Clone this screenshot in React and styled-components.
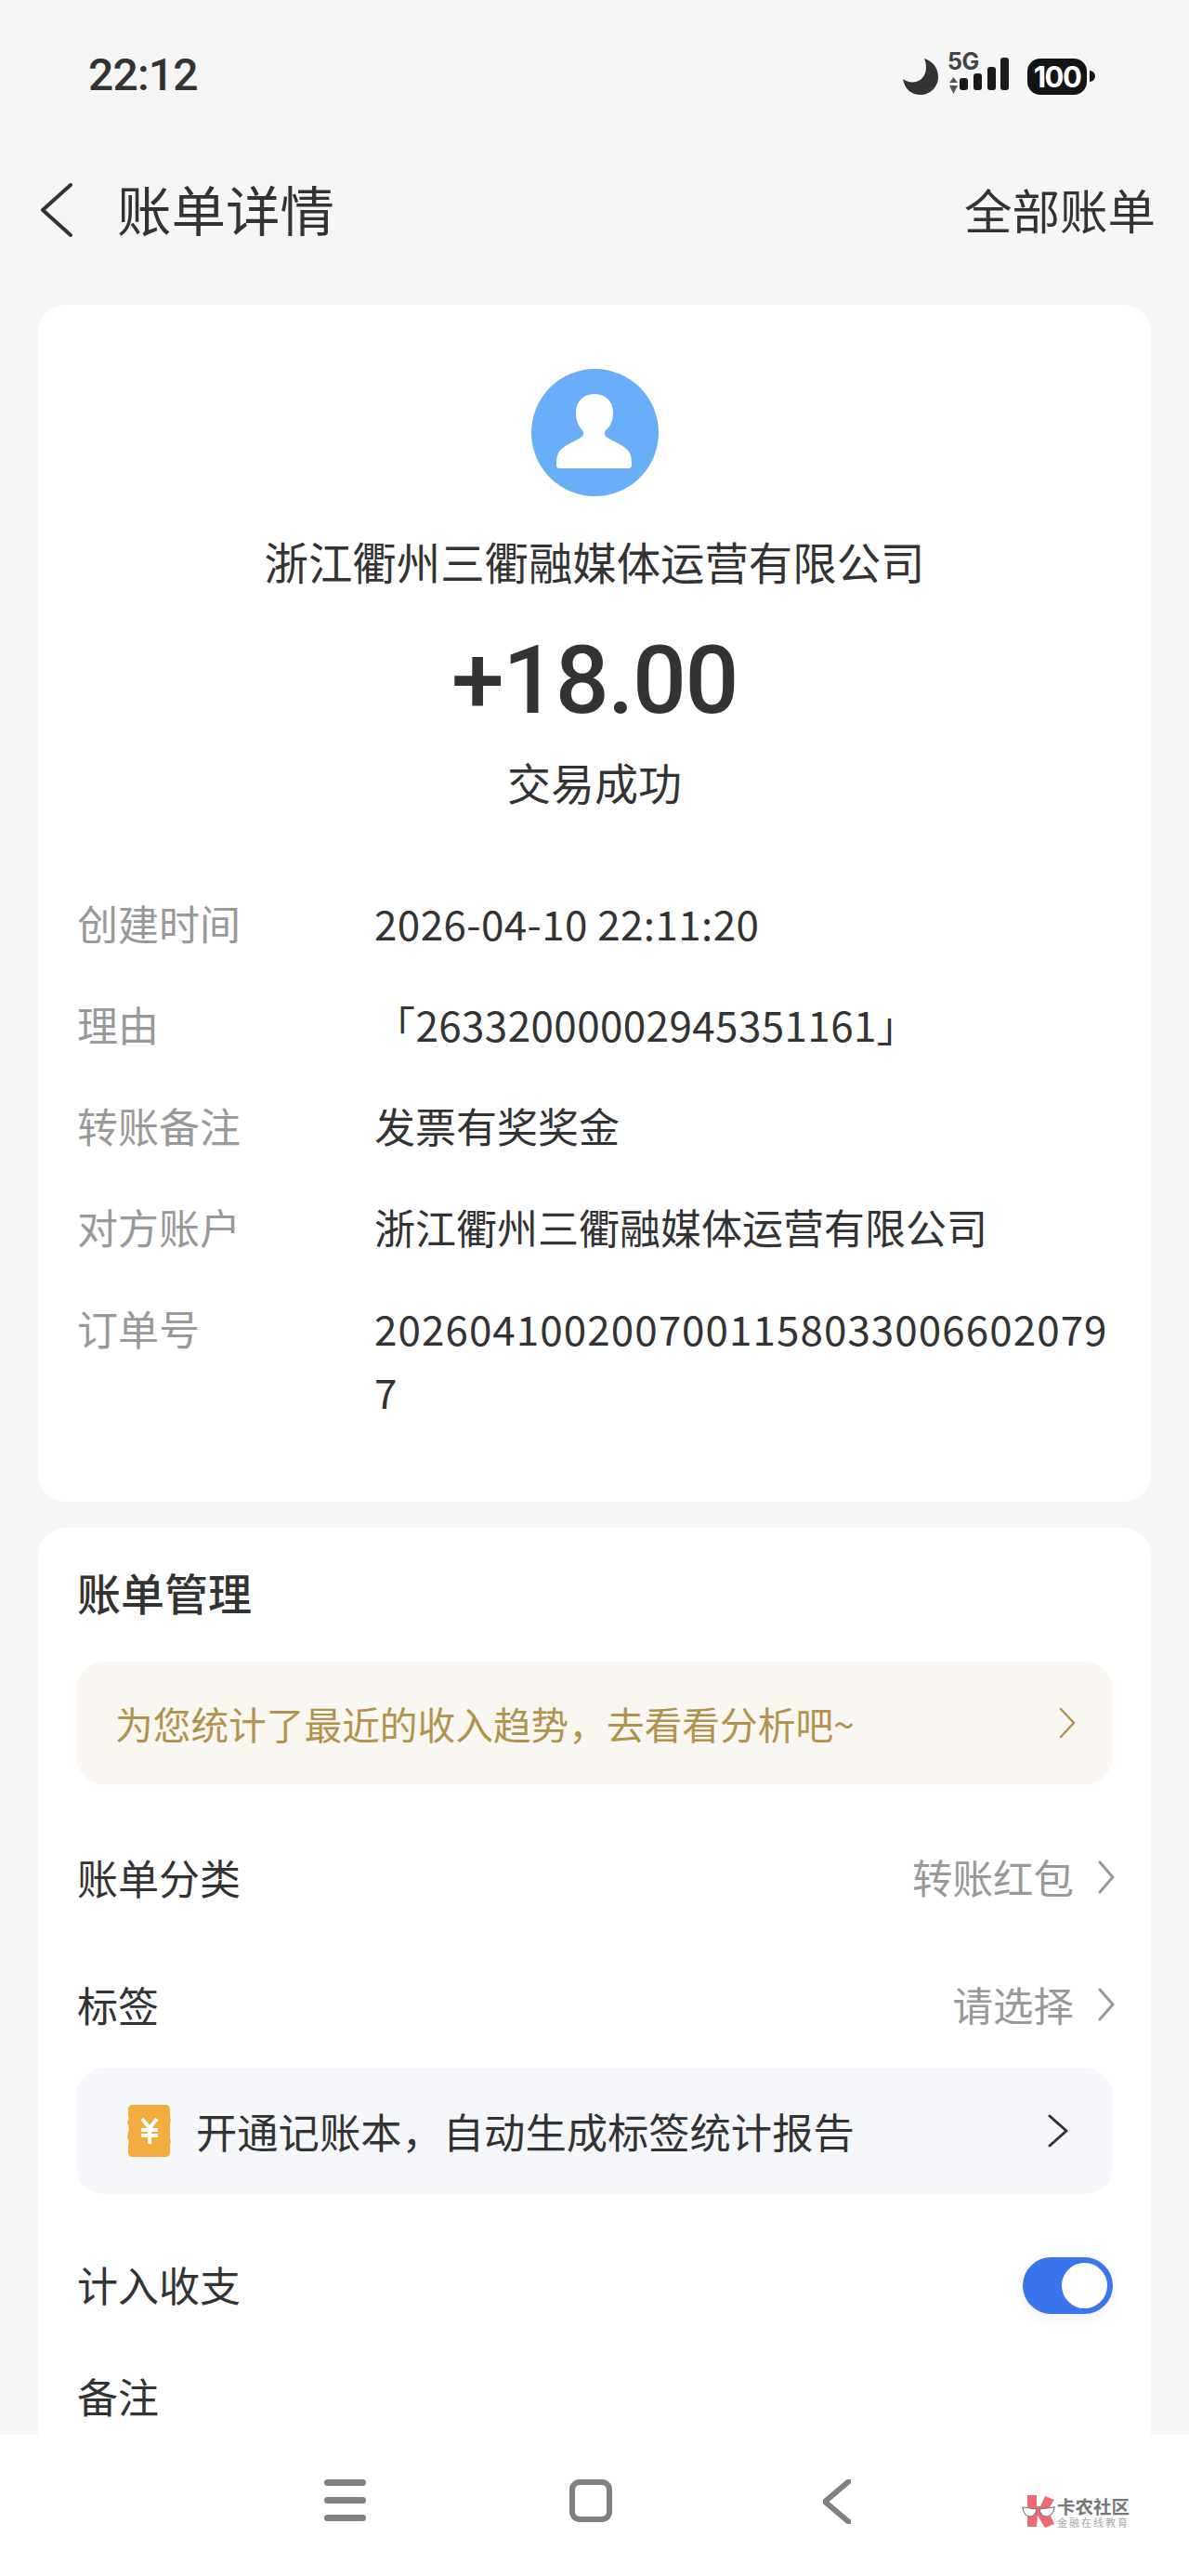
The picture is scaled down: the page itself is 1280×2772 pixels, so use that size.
import styled, { createGlobalStyle } from 'styled-components';

const GlobalStyle = createGlobalStyle`
    html, body {
        margin: 0;
        padding: 0;
        background: #f6f6f6;
    }
    * {
        box-sizing: border-box;
    }
`

const fontStack = `"Noto Sans CJK SC", "Noto Sans", sans-serif`

const details = [
    { label: '创建时间', value: '2026-04-10 22:11:20', spacing: 0.4 },
    { label: '理由', value: '「26332000002945351161」', spacing: 0.4 },
    { label: '转账备注', value: '发票有奖奖金' },
    { label: '对方账户', value: '浙江衢州三衢融媒体运营有限公司' },
    { label: '订单号', value: '20260410020070011580330066020797', spacing: 1.05 },
]

function Chevron({ w = 18, h = 36, color = '#999', stroke = 3, dir = 'right' }) {
    const d = dir === 'right' ? `M2 2 L${w - 2} ${h / 2} L2 ${h - 2}` : `M${w - 2} 2 L2 ${h / 2} L${w - 2} ${h - 2}`
    return (
        <svg width={w} height={h} viewBox={`0 0 ${w} ${h}`} fill="none">
            <path d={d} stroke={color} strokeWidth={stroke} strokeLinecap="round" strokeLinejoin="round" />
        </svg>
    )
}

function Moon() {
    return (
        <svg width="38" height="39" viewBox="0 0 38 39">
            <path d="M23 0 C33 3 38 11 38 20 C38 31 29 39 19 39 C9 39 2 33 0 22 C4 25 9 26 14 25 C23 23 28 12 23 0 Z" fill="#333" />
        </svg>
    )
}

function Signal() {
    return (
        <svg width="68" height="52" viewBox="0 0 68 52">
            <text x="0" y="23" fontFamily="Inter, sans-serif" fontSize="25" fontWeight="700" letterSpacing="-0.5" fill="#444">5G</text>
            <path d="M6.5 31 L11 37 L2 37 Z M6.5 49 L11 40 L2 40 Z" fill="#555" />
            <rect x="13" y="32" width="9" height="13" rx="3" fill="#1a1a1a" />
            <rect x="28" y="27" width="9" height="18" rx="3" fill="#1a1a1a" />
            <rect x="43" y="20" width="9" height="25" rx="3" fill="#1a1a1a" />
            <rect x="57" y="10" width="9" height="35" rx="3" fill="#1a1a1a" />
        </svg>
    )
}

function Person() {
    return (
        <svg width="137" height="137" viewBox="0 0 137 137">
            <path
                d="M68 27 C55 27 48 36 48 47 C48 56 51 62 55 66 C57 69 56 72 53 74 C45 79 35 82 30 89 C28 92 27 96 27 103 C27 106 28 107 31 107 L104 107 C107 107 108 106 108 103 C108 96 107 92 105 89 C100 82 90 79 82 74 C79 72 78 69 80 66 C85 62 88 56 88 47 C88 36 81 27 68 27 Z"
                fill="#fff"
            />
        </svg>
    )
}

function Ticket() {
    return (
        <svg width="47" height="56" viewBox="0 0 47 56">
            <path
                d="M6 0 L41 0 C44 0 46 2 46 5 L46 13 C47 16 47 18 46 20 L46 36 C47 38 47 40 46 43 L46 51 C46 54 44 56 41 56 L6 56 C3 56 1 54 1 51 L1 43 C2 40 2 38 0 36 L1 29 C2 27 2 25 1 22 L0 18 C2 16 2 14 1 12 L1 5 C1 2 3 0 6 0 Z"
                fill="#f4ac3f"
            />
            <path d="M16 15 L24 25 L32 15 M24 25 L24 42 M15 27 L33 27 M15 33 L33 33" stroke="#fff" strokeWidth="4" fill="none" />
        </svg>
    )
}

function LogoMark() {
    return (
        <svg width="36" height="36" viewBox="0 0 36 36">
            <path d="M6 0 L16 0 L16 12 L20 12 L25 1 L35 5 L28 16 L35 31 L25 35 L17 22 L16 34 L6 34 Z" fill="#ec6a72" />
            <path d="M1 13 L16 15 Q15 23 8 23 Q2 22 1 13 Z" fill="#fff" stroke="#777" strokeWidth="1.2" />
            <path d="M19 15 L35 13 Q34 22 27 23 Q20 23 19 15 Z" fill="#fff" stroke="#777" strokeWidth="1.2" />
        </svg>
    )
}

export default function App() {
    return (
        <Page>
            <GlobalStyle />
            <Scroll>
                <StatusBar>
                    <Time>22:12</Time>
                    <StatusIcons>
                        <Moon />
                        <Signal />
                        <Battery>
                            <BatteryBody>100</BatteryBody>
                            <BatteryNub />
                        </Battery>
                    </StatusIcons>
                </StatusBar>
                <Header>
                    <HeaderLeft>
                        <Chevron w={34} h={58} color="#333" stroke={4} dir="left" />
                        <Title>账单详情</Title>
                    </HeaderLeft>
                    <HeaderLink>全部账单</HeaderLink>
                </Header>
                <Content>
                    <SummaryCard>
                        <Avatar><Person /></Avatar>
                        <Name>浙江衢州三衢融媒体运营有限公司</Name>
                        <Amount>+18.00</Amount>
                        <Result>交易成功</Result>
                        <DetailList>
                            {details.map((item) => (
                                <DetailRow key={item.label}>
                                    <DetailLabel>{item.label}</DetailLabel>
                                    <DetailValue $spacing={item.spacing}>{item.value}</DetailValue>
                                </DetailRow>
                            ))}
                        </DetailList>
                    </SummaryCard>
                    <ManageCard>
                        <SectionTitle>账单管理</SectionTitle>
                        <TrendBanner>
                            <TrendText>为您统计了最近的收入趋势，去看看分析吧~</TrendText>
                            <Chevron w={18} h={34} color="#b3934c" stroke={2.5} />
                        </TrendBanner>
                        <SettingRow $top={71}>
                            <SettingLabel>账单分类</SettingLabel>
                            <SettingValue>转账红包<Chevron /></SettingValue>
                        </SettingRow>
                        <SettingRow $top={77}>
                            <SettingLabel>标签</SettingLabel>
                            <SettingValue>请选择<Chevron /></SettingValue>
                        </SettingRow>
                        <PromoBanner>
                            <PromoLeft>
                                <Ticket />
                                <PromoText>开通记账本，自动生成标签统计报告</PromoText>
                            </PromoLeft>
                            <Chevron w={22} h={36} color="#333" stroke={3} />
                        </PromoBanner>
                        <SettingRow $top={68}>
                            <SettingLabel>计入收支</SettingLabel>
                            <Toggle><Knob /></Toggle>
                        </SettingRow>
                        <SettingRow $top={60}>
                            <SettingLabel>备注</SettingLabel>
                        </SettingRow>
                    </ManageCard>
                </Content>
            </Scroll>
            <NavBar>
                <MenuIcon><i /><i /><i /></MenuIcon>
                <HomeIcon />
                <NavBack><Chevron w={30} h={48} color="#808080" stroke={6} dir="left" /></NavBack>
                <Watermark>
                    <LogoMark />
                    <WatermarkText>
                        <WatermarkName>卡农社区</WatermarkName>
                        <WatermarkSub>金融在线教育</WatermarkSub>
                    </WatermarkText>
                </Watermark>
            </NavBar>
        </Page>
    )
}

const Page = styled.div`
    width: 1280px;
    height: 2772px;
    display: flex;
    flex-direction: column;
    overflow: hidden;
    background: #f6f6f6;
    color: #333;
    font-family: ${fontStack};
`

const Scroll = styled.div`
    height: 2620px;
    overflow: hidden;
`

const StatusBar = styled.div`
    height: 164px;
    padding: 0 101px 0 95px;
    display: flex;
    justify-content: space-between;
    align-items: center;
`

const Time = styled.div`
    font-family: Roboto, sans-serif;
    font-size: 48px;
    font-weight: 500;
    letter-spacing: -0.8px;
    line-height: 60px;
    margin-top: -2px;
    color: #333;
`

const StatusIcons = styled.div`
    display: flex;
    align-items: center;
    gap: 10px;

    svg:nth-child(2) {
        margin-top: -8px;
    }
`

const Battery = styled.div`
    display: flex;
    align-items: center;
    gap: 3px;
    margin-left: 8px;
`

const BatteryBody = styled.div`
    width: 64px;
    height: 39px;
    border-radius: 14px;
    background: #141414;
    color: #fff;
    font-family: Inter, sans-serif;
    font-size: 31px;
    font-weight: 700;
    line-height: 39px;
    text-align: center;
    letter-spacing: -1.5px;
`

const BatteryNub = styled.div`
    width: 6px;
    height: 12px;
    border-radius: 0 6px 6px 0;
    background: #141414;
`

const Header = styled.div`
    height: 124px;
    padding: 0 36px 0 44px;
    display: flex;
    justify-content: space-between;
    align-items: center;
`

const HeaderLeft = styled.div`
    display: flex;
    align-items: center;
    gap: 48px;
`

const Title = styled.div`
    font-size: 58.5px;
    font-weight: 400;
    line-height: 70px;
    margin-top: -4px;
`

const HeaderLink = styled.div`
    font-size: 51.5px;
    line-height: 70px;
    margin-top: -2px;
`

const Content = styled.div`
    padding: 40px 41px 0;
    display: flex;
    flex-direction: column;
    gap: 28px;
`

const SummaryCard = styled.div`
    background: #fff;
    border-radius: 30px;
    padding: 69px 42px 85px;
    display: flex;
    flex-direction: column;
    align-items: center;
`

const Avatar = styled.div`
    width: 137px;
    height: 137px;
    border-radius: 50%;
    background: #68aef8;
    display: flex;
`

const Name = styled.div`
    margin-top: 35px;
    font-size: 47.4px;
    line-height: 70px;
`

const Amount = styled.div`
    margin-top: 28px;
    font-family: Roboto, sans-serif;
    font-size: 102px;
    font-weight: 500;
    letter-spacing: -1.5px;
    line-height: 130px;
`

const Result = styled.div`
    margin-top: 14px;
    font-size: 47px;
    line-height: 60px;
`

const DetailList = styled.div`
    margin-top: 88px;
    width: 100%;
    display: flex;
    flex-direction: column;
    gap: 41px;
`

const DetailRow = styled.div`
    display: grid;
    grid-template-columns: 320px 1fr;
`

const DetailLabel = styled.div`
    font-size: 44px;
    line-height: 68px;
    color: #999;
`

const DetailValue = styled.div`
    font-size: 44px;
    line-height: 68px;
    color: #333;
    word-break: break-all;
    letter-spacing: ${(props) => props.$spacing || 0}px;
`

const ManageCard = styled.div`
    background: #fff;
    border-radius: 30px 30px 0 0;
    padding: 39px 41px 60px;
`

const SectionTitle = styled.div`
    font-size: 47px;
    font-weight: 500;
    line-height: 60px;
    margin-left: 1px;
`

const TrendBanner = styled.div`
    margin-top: 45px;
    height: 132px;
    padding: 0 40px 0 42px;
    border-radius: 30px;
    background: #faf7f3;
    display: flex;
    justify-content: space-between;
    align-items: center;
`

const TrendText = styled.div`
    font-size: 40.7px;
    color: #b3934c;
`

const SettingRow = styled.div`
    margin-top: ${(props) => props.$top}px;
    height: 60px;
    display: flex;
    justify-content: space-between;
    align-items: center;
`

const SettingLabel = styled.div`
    font-size: 44px;
    color: #333;
    margin-top: -3px;
    margin-left: 1px;
`

const SettingValue = styled.div`
    display: flex;
    align-items: center;
    gap: 26px;
    font-size: 43.5px;
    color: #999;
    margin-top: -3px;
    margin-right: -2px;
`

const PromoBanner = styled.div`
    margin-top: 37px;
    height: 136px;
    padding: 0 48px 0 55px;
    border-radius: 30px;
    background: #f6f7fb;
    display: flex;
    justify-content: space-between;
    align-items: center;
`

const PromoLeft = styled.div`
    display: flex;
    align-items: center;
    gap: 27px;
`

const PromoText = styled.div`
    font-size: 44.3px;
    color: #333;
`

const Toggle = styled.div`
    width: 97px;
    height: 61px;
    padding: 6px 6px 6px 0;
    border-radius: 31px;
    background: #3a75ee;
    display: flex;
    justify-content: flex-end;
    box-shadow: 0 6px 14px rgba(0, 0, 0, 0.06);
`

const Knob = styled.div`
    width: 49px;
    height: 49px;
    border-radius: 50%;
    background: #fff;
`

const NavBar = styled.div`
    position: relative;
    height: 152px;
    background: #fff;
    padding: 0 0 0 349px;
    display: flex;
    align-items: flex-start;
    gap: 219px;

    & > * {
        margin-top: 48px;
    }
`

const MenuIcon = styled.div`
    width: 45px;
    height: 45px;
    display: flex;
    flex-direction: column;
    justify-content: space-between;

    i {
        display: block;
        height: 7px;
        border-radius: 4px;
        background: #808080;
    }
`

const HomeIcon = styled.div`
    width: 46px;
    height: 46px;
    border: 6px solid #808080;
    border-radius: 11px;
`

const NavBack = styled.div`
    margin-left: 8px;
    height: 48px;
`

const Watermark = styled.div`
    position: absolute;
    left: 1100px;
    top: 17px;
    display: flex;
    align-items: center;
    gap: 2px;
`

const WatermarkText = styled.div`
    display: flex;
    flex-direction: column;
`

const WatermarkName = styled.div`
    font-size: 19.5px;
    font-weight: 700;
    line-height: 21px;
    color: #777;
    white-space: nowrap;
`

const WatermarkSub = styled.div`
    font-size: 11px;
    line-height: 14px;
    letter-spacing: 2px;
    color: #aaa;
    white-space: nowrap;
`
